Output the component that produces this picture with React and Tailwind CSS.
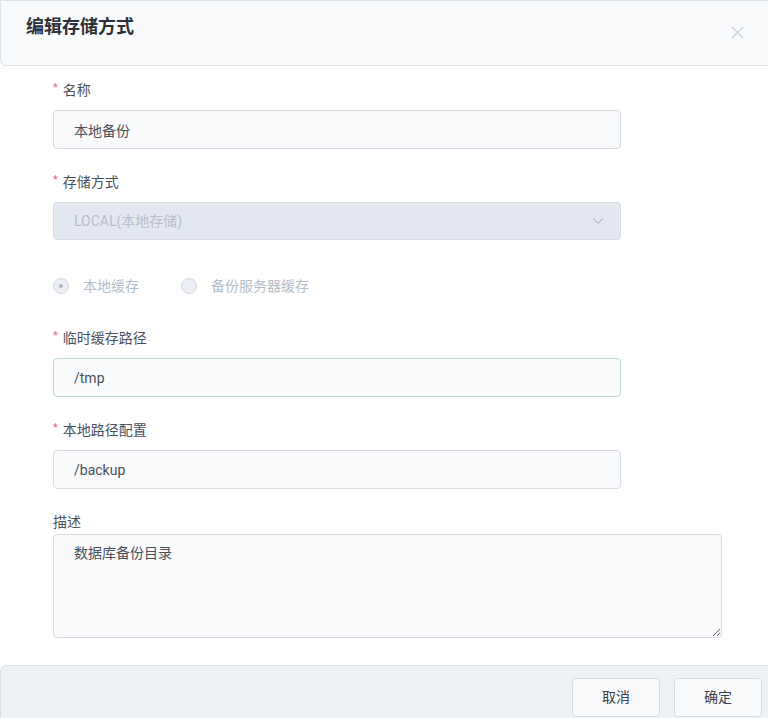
import { ChevronDown, X } from "lucide-react";

const labelClass = "flex items-center h-5 text-[14px] text-[#4a4f5a]";
const inputClass =
  "w-[568px] h-[39px] px-5 rounded-[4px] border bg-[#f8fafc] text-[14px] text-[#4a4f5a] outline-none";

function Label({ required, children }) {
  return (
    <div className={labelClass}>
      {required && <span className="text-[#e8687a] text-[11px] mr-[5px] -mt-1">*</span>}
      {children}
    </div>
  );
}

function Radio({ checked, children }) {
  return (
    <label className="flex items-center gap-[14px] text-[14px] text-[#b6bcc6]">
      <span className="w-4 h-4 rounded-full border border-[#d3d8e0] bg-[#eceff4] flex items-center justify-center">
        {checked && <span className="w-[4px] h-[4px] rounded-full bg-[#b0b6c0]" />}
      </span>
      {children}
    </label>
  );
}

export default function App() {
  return (
    <div
      className="w-[768px] h-[718px] overflow-hidden bg-white flex flex-col"
      style={{ fontFamily: 'Roboto, "Noto Sans CJK SC", sans-serif' }}
    >
      {/* Header */}
      <div className="h-[66px] shrink-0 mr-[-8px] flex items-center justify-between pl-[25px] pr-[27px] bg-[#f8fafc] border border-[#dde1e8] rounded-b-md pb-[14px]">
        <h2 className="text-[18px] font-bold text-[#2d3038]">编辑存储方式</h2>
        <X size={21} strokeWidth={1.4} className="text-[#c9ced6] mt-[12px]" />
      </div>

      {/* Body */}
      <div className="flex-1 pl-[53px] pt-[14px]">
        <Label required>名称</Label>
        <input className={`${inputClass} mt-[10px] border-[#d6dbe4]`} defaultValue="本地备份" />

        <div className="mt-[23px]">
          <Label required>存储方式</Label>
        </div>
        <div className="mt-[10px] w-[568px] h-[38px] px-5 rounded-[4px] border border-[#d6dbe4] bg-[#e4e8ef] flex items-center justify-between">
          <span className="text-[14px] text-[#b9bec8]">LOCAL(本地存储)</span>
          <ChevronDown size={18} strokeWidth={1.5} className="text-[#b9bec8] -mr-[7px]" />
        </div>

        <div className="mt-[36px] flex items-center gap-[42px] h-5">
          <Radio checked>本地缓存</Radio>
          <Radio>备份服务器缓存</Radio>
        </div>

        <div className="mt-[32px]">
          <Label required>临时缓存路径</Label>
        </div>
        <input className={`${inputClass} mt-[10px] h-[38px] border-[#bcd7cf]`} defaultValue="/tmp" />

        <div className="mt-[23px]">
          <Label required>本地路径配置</Label>
        </div>
        <input className={`${inputClass} mt-[10px] border-[#d6dbe4]`} defaultValue="/backup" />

        <div className="mt-[23px]">
          <Label>描述</Label>
        </div>
        <textarea
          className="mt-[2px] block w-[669px] h-[104px] px-5 py-[8px] rounded-[4px] border border-[#d6dbe4] bg-[#f8fafc] text-[14px] text-[#4a4f5a] outline-none"
          defaultValue="数据库备份目录"
        />
      </div>

      {/* Footer */}
      <div className="h-[53px] shrink-0 mr-[-8px] bg-[#eef2f6] border-t border-l border-[#dde1e8] rounded-tl-md flex justify-end items-start pt-[12px] pr-[14px] gap-[14px]">
        <button className="w-[88px] h-[39px] rounded-[4px] border border-[#d6dbe3] bg-[#f8fafc] text-[14px] text-[#3a3f48]">
          取消
        </button>
        <button className="w-[88px] h-[39px] rounded-[4px] border border-[#d6dbe3] bg-[#f8fafc] text-[14px] text-[#3a3f48]">
          确定
        </button>
      </div>
    </div>
  );
}
